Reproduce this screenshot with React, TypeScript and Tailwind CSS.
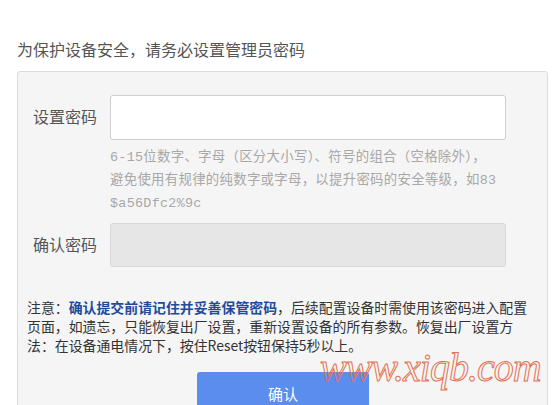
const cjk = "font-['Noto_Sans_CJK_SC','Noto_Sans',sans-serif]";

export default function App() {
  return (
    <div className={`relative h-[405px] w-[553px] overflow-hidden bg-white ${cjk}`}>
      <p className="pl-[17px] pt-[38px] text-[16px] leading-[22px] text-[#555]">
        为保护设备安全，请务必设置管理员密码
      </p>

      <div className="ml-[17px] mt-[11px] w-[531px] rounded-[3px] border border-[#dcdcdc] bg-[#f5f5f5] pb-10">
        {/* 设置密码 */}
        <div className="flex items-center pl-[15px] pt-[23px]">
          <label className="w-[77px] pb-[4px] text-[16px] leading-[22px] text-[#555]">设置密码</label>
          <input
            type="password"
            className="h-[45px] w-[396px] rounded-[3px] border border-[#cfcfcf] bg-white outline-none"
          />
        </div>
        <p className="ml-[92px] mt-[6px] text-[13.4px] leading-[23px] tracking-[0.3px] text-[#a8a8a8] font-['Liberation_Mono','Noto_Sans_CJK_SC',monospace]">
          6-15位数字、字母（区分大小写）、符号的组合（空格除外），
          <br />
          避免使用有规律的纯数字或字母，以提升密码的安全等级，如83
          <br />
          $a56Dfc2%9c
        </p>

        {/* 确认密码 */}
        <div className="mt-[8px] flex items-center pl-[15px]">
          <label className="w-[77px] pb-[2px] text-[16px] leading-[22px] text-[#555]">确认密码</label>
          <input
            type="password"
            disabled
            className="h-[44px] w-[396px] rounded-[3px] border border-[#d8d8d8] bg-[#e6e6e6] outline-none"
          />
        </div>

        {/* 注意 */}
        <p className="ml-[9px] mt-[31px] text-[13.9px] leading-[19px] text-[#333]">
          注意：<span className="font-bold text-[#1d4c9e]">确认提交前请记住并妥善保管密码</span>，后续配置设备时需使用该密码进入配置
          <br />
          页面，如遗忘，只能恢复出厂设置，重新设置设备的所有参数。恢复出厂设置方
          <br />
          法：在设备通电情况下，按住Reset按钮保持5秒以上。
        </p>

        <button
          type="button"
          className="ml-[179px] mt-[17px] flex h-[44px] w-[172px] items-center justify-center rounded-[3px] bg-[#5b8def] text-[15px] text-white"
        >
          确认
        </button>
      </div>

      {/* watermark */}
      <span className="pointer-events-none absolute left-[320px] top-[348px] text-[40px] italic leading-none tracking-[-1px] text-transparent font-['Liberation_Serif',serif] [-webkit-text-stroke:1px_#e3714f]">
        www.xiqb.com
      </span>
    </div>
  );
}
